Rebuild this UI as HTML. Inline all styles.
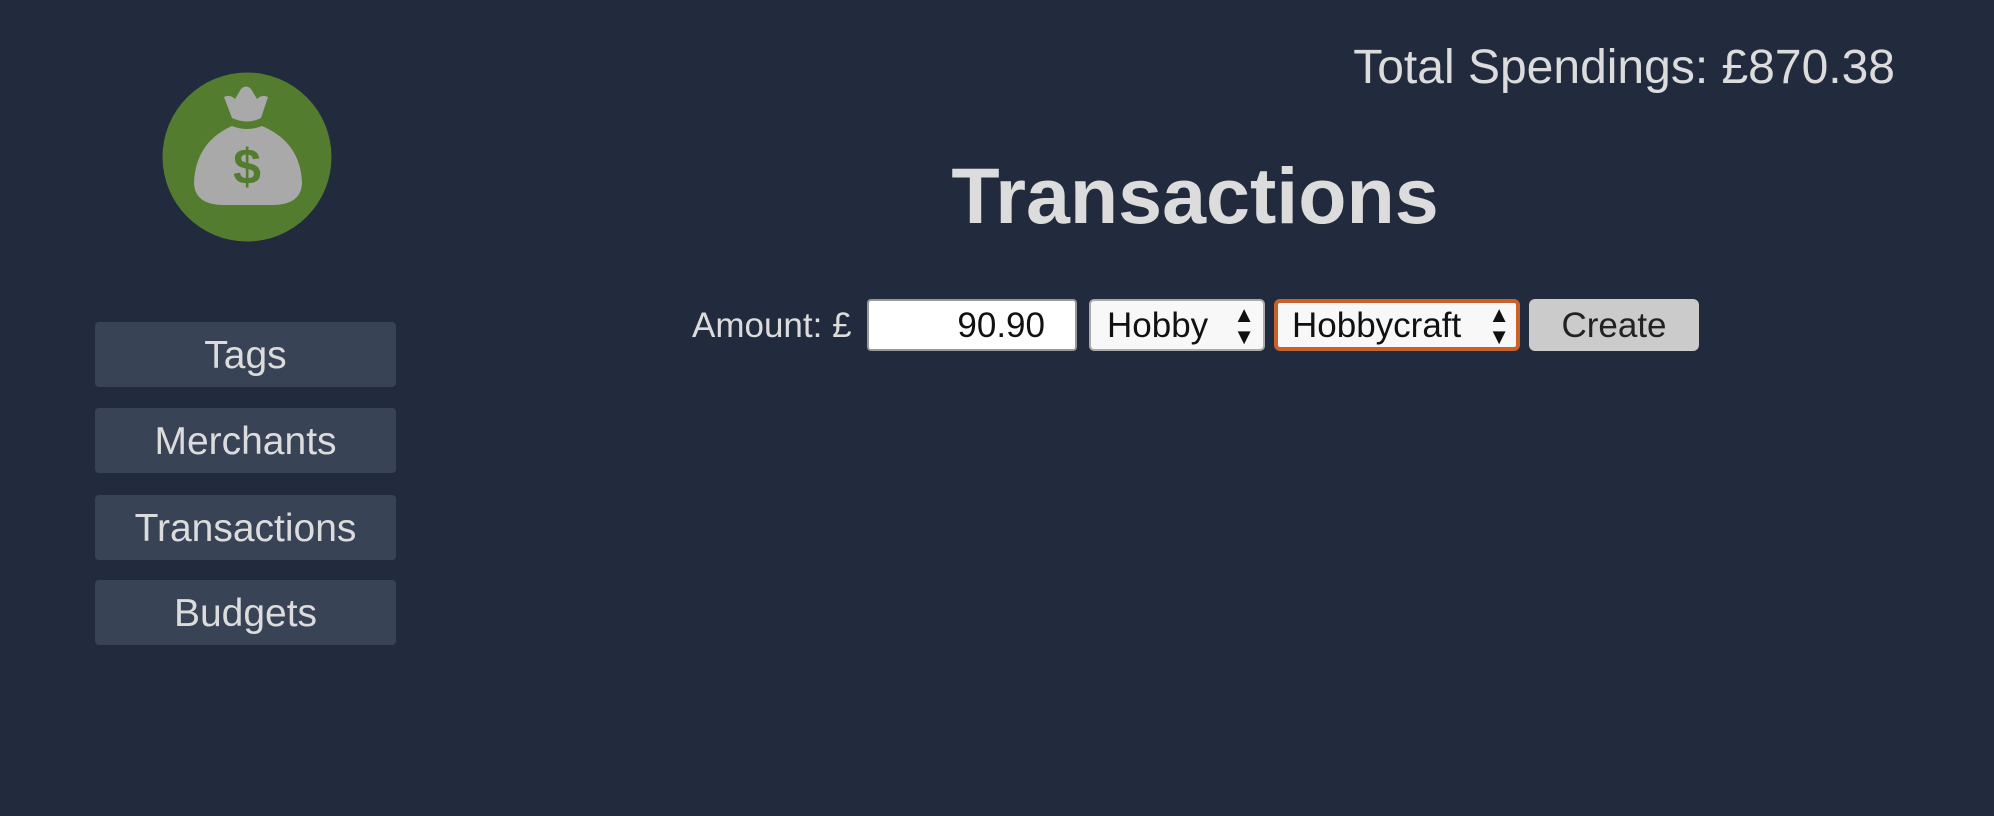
<!DOCTYPE html>
<html><head><style>
body{margin:0;width:1994px;height:816px;background:#222b3e;font-family:"Liberation Sans",Arial,sans-serif;color:#dcdcdc;position:relative;overflow:hidden}
.nav{position:absolute;left:95px;width:301px;height:65px;background:#394356;border-radius:4px;text-align:center;line-height:67px;font-size:39px;color:#dcdcdc}
.ctl{position:absolute;top:299px;height:52px;box-sizing:border-box;font-size:35px;color:#111;line-height:48px}
</style></head><body>
<svg style="position:absolute;left:162px;top:72px" width="170" height="170" viewBox="0 0 170 170">
<circle cx="85" cy="85" r="84.5" fill="#547c2e"/>
<path d="M62 25 Q68 22 73 27 L79 17 Q84 12 89 17 L95 27 Q100 22 106 25 L99 46 Q85 53 70 46 Z" fill="#a9a9a9"/>
<path d="M70 54 Q85 60 100 54 Q138 70 140 110 Q140 132 112 133 L60 133 Q32 132 32 110 Q34 70 70 54 Z" fill="#a9a9a9"/>
<text x="85" y="112" text-anchor="middle" font-family="Liberation Sans" font-weight="bold" font-size="50" fill="#547c2e">$</text>
</svg>
<div class="nav" style="top:322px">Tags</div>
<div class="nav" style="top:408px">Merchants</div>
<div class="nav" style="top:495px">Transactions</div>
<div class="nav" style="top:580px">Budgets</div>
<div style="position:absolute;right:99px;top:40px;font-size:48px">Total Spendings: £870.38</div>
<div style="position:absolute;left:0;width:2390px;text-align:center;top:150px;font-size:79px;font-weight:bold">Transactions</div>
<div style="position:absolute;left:692px;top:300px;line-height:52px;font-size:35px">Amount: £</div>
<div class="ctl" style="left:867px;width:210px;background:#fff;border:2px solid #999;border-radius:4px;text-align:right;padding-right:30px;line-height:50px">90.90</div>
<div class="ctl" style="left:1089px;width:176px;background:#f8f8f8;border:2px solid #aaa;border-radius:5px;padding-left:16px;line-height:50px">Hobby<span style="position:absolute;right:8px;font-size:22px;line-height:22px;top:3px">▲<br>▼</span></div>
<div class="ctl" style="left:1274px;width:246px;background:#f8f8f8;border:4px solid #c8622a;border-radius:6px;padding-left:14px;line-height:46px">Hobbycraft<span style="position:absolute;right:6px;font-size:22px;line-height:22px;top:1px">▲<br>▼</span></div>
<div class="ctl" style="left:1529px;width:170px;background:#cbcbcb;border-radius:6px;text-align:center;color:#222;line-height:54px">Create</div>
</body></html>
